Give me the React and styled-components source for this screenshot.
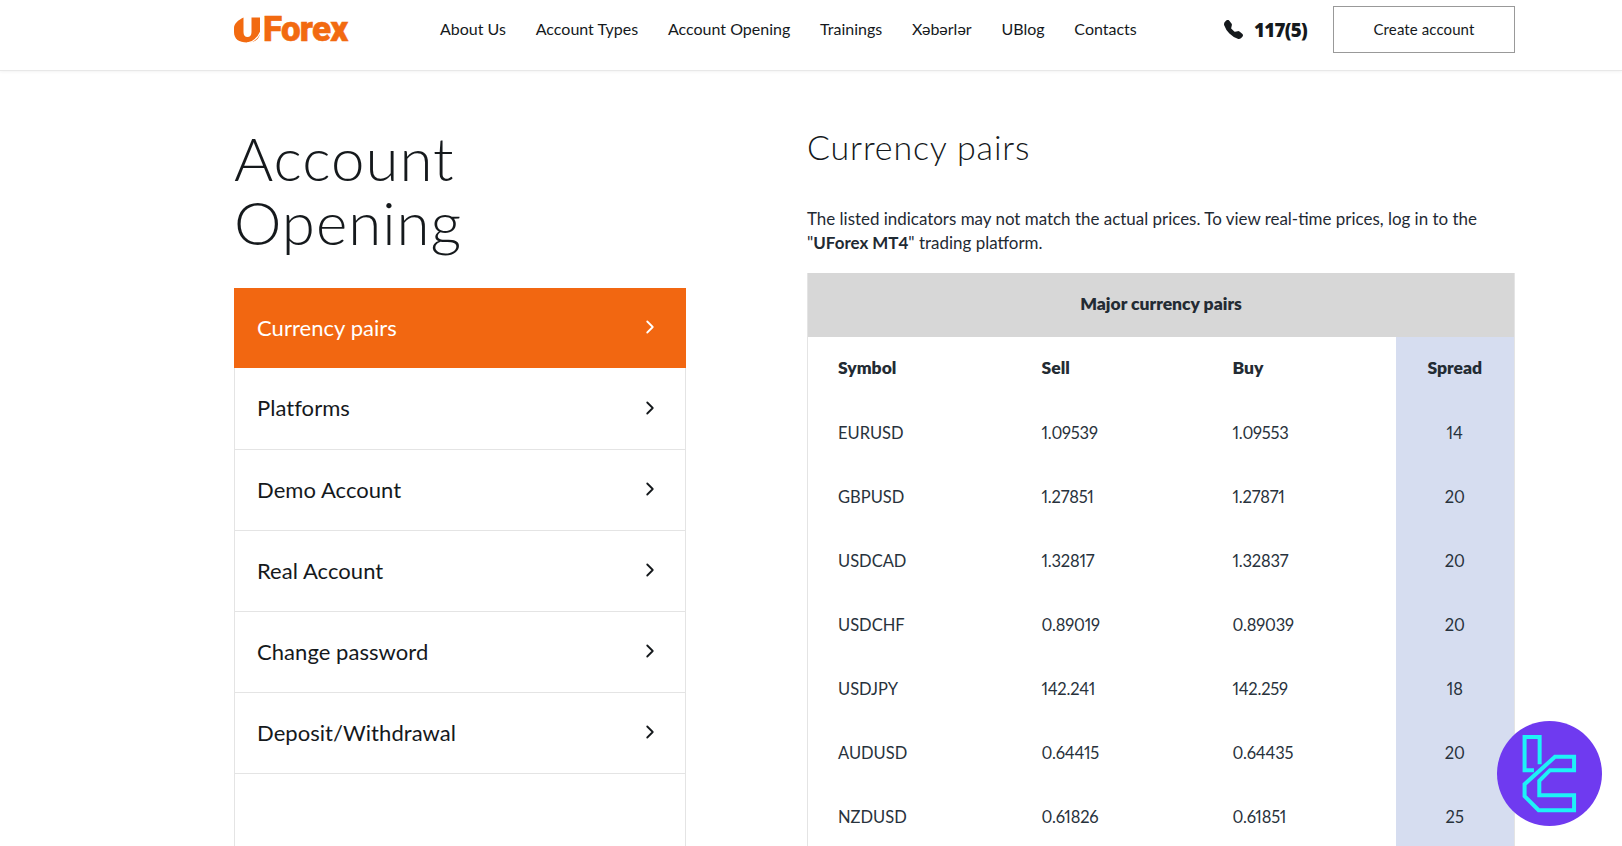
import React from 'react';
import styled, { createGlobalStyle } from 'styled-components';
import { ChevronRight } from 'lucide-react';
import { BsTelephoneFill } from 'react-icons/bs';

const GlobalStyle = createGlobalStyle`
  html, body {
    margin: 0;
    padding: 0;
    height: 846px;
    overflow: hidden;
    background: #fff;
    font-family: Lato, "Noto Sans", sans-serif;
    color: #15191c;
  }
  * { box-sizing: border-box; }
`;

const Page = styled.div`
  width: 1622px;
  height: 846px;
  overflow: hidden;
  display: flex;
  flex-direction: column;
`;

const Header = styled.header`
  flex: none;
  height: 71px;
  padding: 6px 107px 0 234px;
  display: flex;
  align-items: flex-start;
  border-bottom: 1px solid #e8e8e8;
  box-shadow: 0 1px 3px rgba(0, 0, 0, 0.05);
`;

const Logo = styled.a`
  width: 206px;
  height: 47px;
  display: flex;
  align-items: center;
  gap: 3px;
  color: #f26a10;
  font-family: Roboto, sans-serif;
  font-weight: 900;
  font-size: 35px;
  letter-spacing: -0.8px;
  -webkit-text-stroke: 0.5px #f26a10;
`;

const Nav = styled.nav`
  height: 45px;
  display: flex;
  align-items: center;
  gap: 29.8px;
`;

const NavLink = styled.a`
  font-size: 16px;
  color: #15191c;
`;

const Phone = styled.div`
  margin-left: auto;
  height: 47px;
  display: flex;
  align-items: center;
  gap: 11px;
  font-family: "Open Sans", sans-serif;
  font-weight: 800;
  font-size: 18.7px;
  letter-spacing: -0.7px;
  color: #15191c;
`;

const CreateButton = styled.button`
  width: 182px;
  height: 47px;
  margin-left: 26px;
  padding: 0 0 2px;
  background: #fff;
  border: 1px solid #999;
  font-family: inherit;
  font-size: 15px;
  letter-spacing: 0.1px;
  color: #15191c;
`;

const Body = styled.main`
  flex: 1;
  min-height: 0;
  padding: 0 107px 0 234px;
  display: grid;
  grid-template-columns: 452px 707px;
  column-gap: 121px;
`;

const Side = styled.aside`
  display: flex;
  flex-direction: column;
  min-height: 0;
`;

const PageTitle = styled.h1`
  margin: 55px 0 34px;
  font-size: 60px;
  line-height: 64px;
  font-weight: 300;
  letter-spacing: 1px;
  color: #15191c;
`;

const Menu = styled.ul`
  flex: 1;
  margin: 0;
  padding: 0;
  list-style: none;
  border-left: 1px solid #e4e4e4;
  border-right: 1px solid #e4e4e4;
`;

const MenuItem = styled.li`
  height: ${(p) => (p.$active ? '80px' : '81px')};
  margin: ${(p) => (p.$active ? '0 -1px' : '0')};
  padding: 0 ${(p) => (p.$active ? '25px' : '24px')} 2px ${(p) => (p.$active ? '23px' : '22px')};
  display: flex;
  align-items: center;
  justify-content: space-between;
  font-size: 22px;
  letter-spacing: 0.05px;
  background: ${(p) => (p.$active ? '#f26711' : 'transparent')};
  color: ${(p) => (p.$active ? '#fff' : '#15191c')};
  border-bottom: ${(p) => (p.$active ? 'none' : '1px solid #e4e4e4')};

  &:nth-child(2) {
    height: 82px;
  }
`;

const Content = styled.section`
  min-height: 0;
`;

const SectionTitle = styled.h2`
  margin: 54px 0 0;
  font-size: 34px;
  line-height: 44px;
  font-weight: 300;
  letter-spacing: 0.85px;
  color: #15191c;
`;

const Lead = styled.p`
  margin: 38px 0 18px;
  font-size: 16.95px;
  line-height: 24px;
  color: #1f2a33;
`;

const Table = styled.table`
  width: 707px;
  table-layout: fixed;
  border-collapse: collapse;
  border-left: 1px solid #e4e4e4;
  border-right: 1px solid #e4e4e4;
  font-variant-numeric: proportional-nums;
`;

const Caption = styled.th`
  height: 64px;
  padding: 0 0 3px;
  background: #d7d7d7;
  font-size: 17.5px;
  font-weight: 800;
  color: #232b33;
`;

const HeadCell = styled.th`
  height: 63px;
  padding: 0 0 2px ${(p) => (p.$spread ? '0' : '30px')};
  text-align: ${(p) => (p.$spread ? 'center' : 'left')};
  font-size: 17.5px;
  font-weight: 800;
  color: #232b33;
  background: ${(p) => (p.$spread ? '#d6ddf0' : 'transparent')};
`;

const Cell = styled.td`
  height: 64px;
  padding: 2px 0 0 ${(p) => (p.$spread ? '0' : '30px')};
  text-align: ${(p) => (p.$spread ? 'center' : 'left')};
  font-size: 16.5px;
  letter-spacing: ${(p) => (p.$num ? '-0.2px' : '0')};
  color: #28323c;
  background: ${(p) => (p.$spread ? '#d6ddf0' : 'transparent')};
`;

const Badge = styled.svg`
  position: fixed;
  left: 1497px;
  top: 721px;
  width: 105px;
  height: 105px;
`;

const menu = ['Currency pairs', 'Platforms', 'Demo Account', 'Real Account', 'Change password', 'Deposit/Withdrawal'];
const links = ['About Us', 'Account Types', 'Account Opening', 'Trainings', 'Xəbərlər', 'UBlog', 'Contacts'];
const rows = [
  ['EURUSD', '1.09539', '1.09553', '14'],
  ['GBPUSD', '1.27851', '1.27871', '20'],
  ['USDCAD', '1.32817', '1.32837', '20'],
  ['USDCHF', '0.89019', '0.89039', '20'],
  ['USDJPY', '142.241', '142.259', '18'],
  ['AUDUSD', '0.64415', '0.64435', '20'],
  ['NZDUSD', '0.61826', '0.61851', '25'],
];

function LogoMark() {
  return (
    <svg width="26" height="26" viewBox="0 0 26 26">
      <path
        fill="#f26a10"
        d="M9.5 .5 V15 C9.5 18.5 11 20 13.5 20 C16 20 17.5 18.5 17.5 15 V.5 H26 V15 C26 22 21 25.5 13 25.5 C5 25.5 0 22 0 15 V11 C0 7 4 3 9.5 .5 Z"
      />
      <path fill="none" stroke="#fff" strokeWidth="1.2" d="M13 26 C19 25 24 21 26.5 15" />
    </svg>
  );
}

export default function App() {
  return (
    <Page>
      <GlobalStyle />
      <Header>
        <Logo>
          <LogoMark />
          <span>Forex</span>
        </Logo>
        <Nav>
          {links.map((link) => (
            <NavLink key={link}>{link}</NavLink>
          ))}
        </Nav>
        <Phone>
          <BsTelephoneFill size={19} />
          117(5)
        </Phone>
        <CreateButton>Create account</CreateButton>
      </Header>
      <Body>
        <Side>
          <PageTitle>
            Account
            <br />
            Opening
          </PageTitle>
          <Menu>
            {menu.map((item, i) => (
              <MenuItem key={item} $active={i === 0}>
                {item}
                <ChevronRight size={22} strokeWidth={2} />
              </MenuItem>
            ))}
          </Menu>
        </Side>
        <Content>
          <SectionTitle>Currency pairs</SectionTitle>
          <Lead>
            The listed indicators may not match the actual prices. To view real-time prices, log in to the
            <br />
            "<b>UForex MT4</b>" trading platform.
          </Lead>
          <Table>
            <colgroup>
              <col style={{ width: '204px' }} />
              <col style={{ width: '191px' }} />
              <col style={{ width: '193px' }} />
              <col style={{ width: '119px' }} />
            </colgroup>
            <thead>
              <tr>
                <Caption colSpan={4}>Major currency pairs</Caption>
              </tr>
              <tr>
                <HeadCell>Symbol</HeadCell>
                <HeadCell>Sell</HeadCell>
                <HeadCell>Buy</HeadCell>
                <HeadCell $spread>Spread</HeadCell>
              </tr>
            </thead>
            <tbody>
              {rows.map((row) => (
                <tr key={row[0]}>
                  <Cell>{row[0]}</Cell>
                  <Cell $num>{row[1]}</Cell>
                  <Cell $num>{row[2]}</Cell>
                  <Cell $spread>{row[3]}</Cell>
                </tr>
              ))}
            </tbody>
          </Table>
        </Content>
      </Body>
      <Badge viewBox="172 93 313 314">
        <circle cx="328.5" cy="250" r="157" fill="#6f3af0" />
        <g fill="none" stroke="#1df2f7" strokeWidth="12">
          <path d="M299 222 V141 H254 V240 H282" />
          <path d="M345 200 H402 V240 H330 L298 272 V315 H402 V360 H296 L254 318 V282 Z" />
        </g>
      </Badge>
    </Page>
  );
}
